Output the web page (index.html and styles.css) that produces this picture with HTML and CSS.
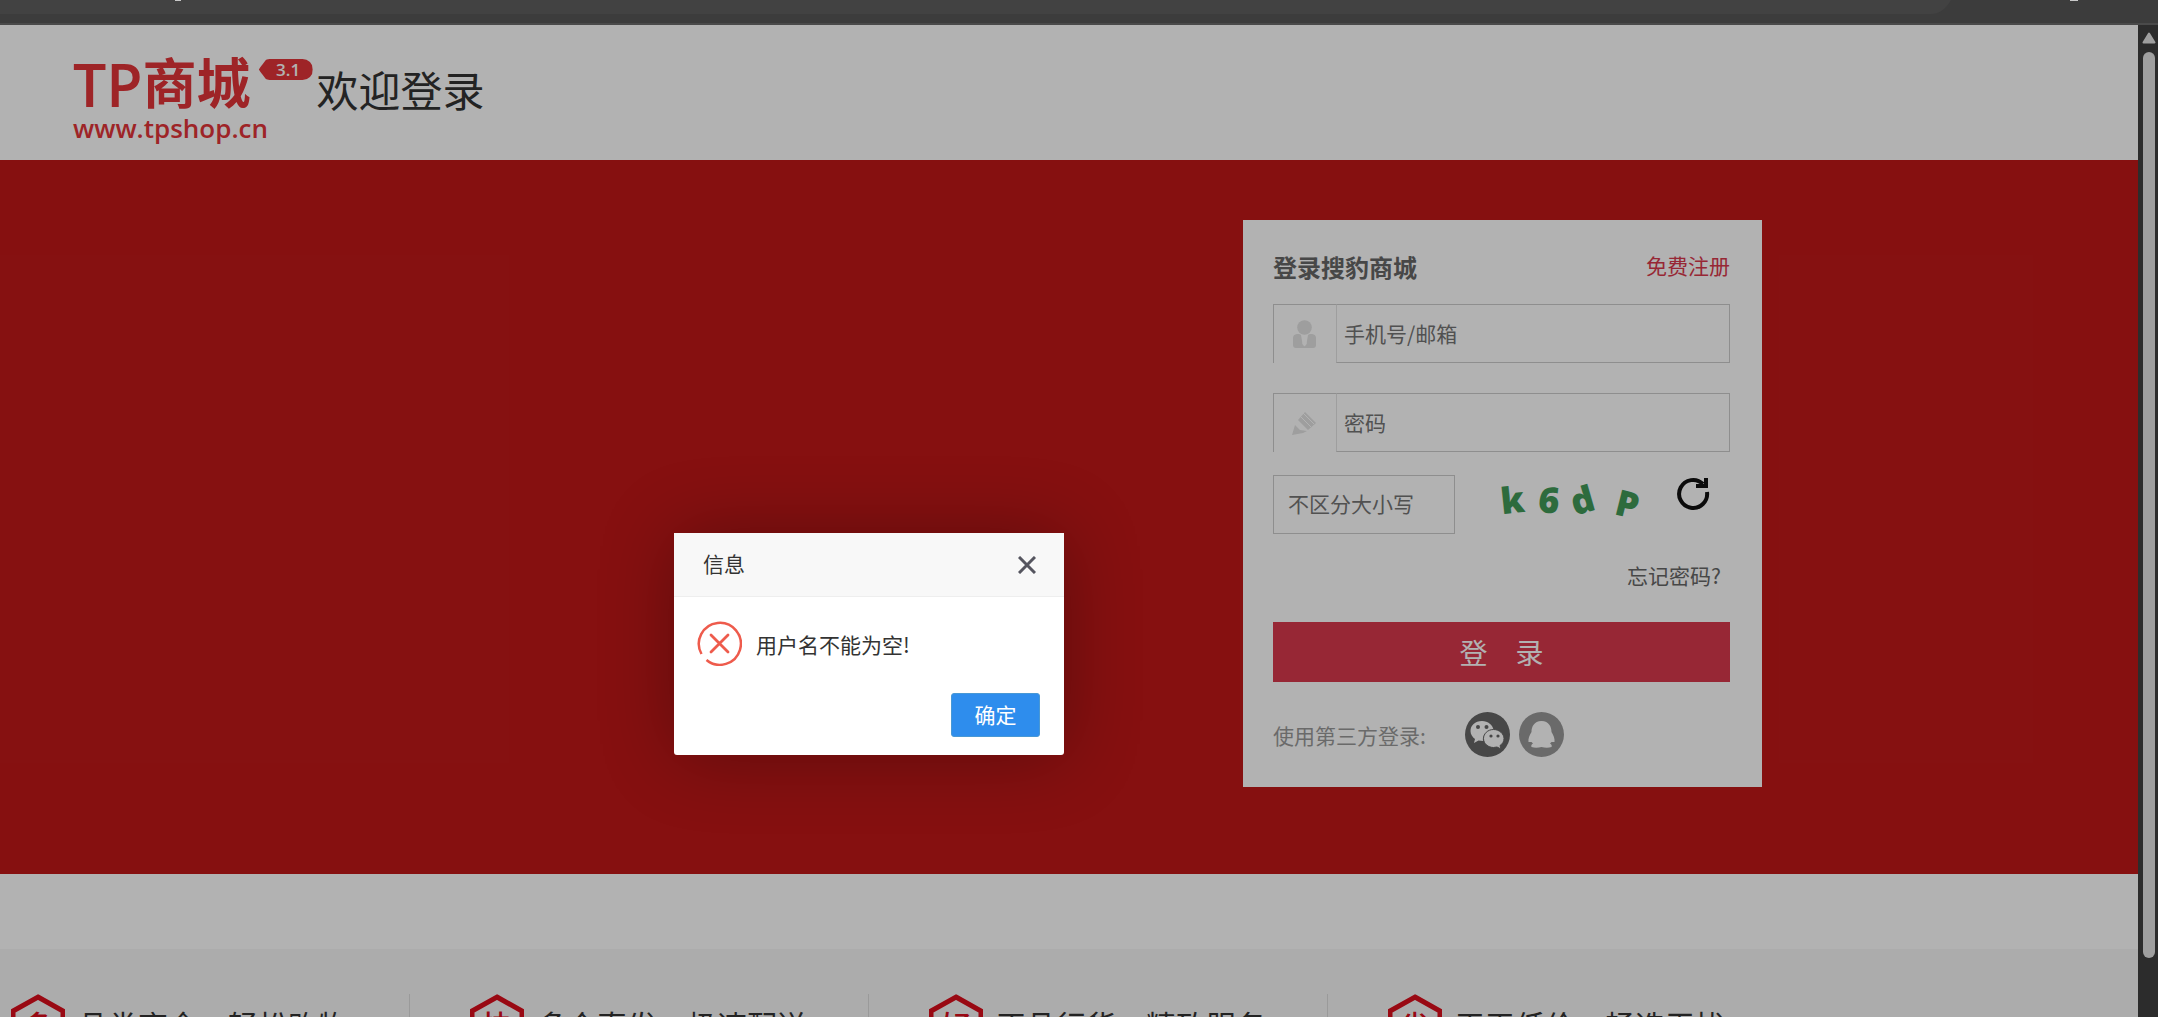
FILE: index.html
```html
<!doctype html>
<html lang="zh-CN">
<head>
  <meta charset="utf-8">
  <title>登录 - 搜豹商城</title>
  <link rel="stylesheet" href="styles.css">
</head>
<body>
<div class="browser-bar">
  <svg width="2100" height="14" viewBox="0 0 2100 14"><path d="M0 0H1951Q1943 14 1931 14H0Z" fill="#424242"/><path d="M175 0H181V1H175ZM2070 0H2078V1H2070Z" fill="#c8c8c8"/></svg>
</div>

<div class="window">
  <div class="page">
    <header class="header">
      <a class="logo" href="#">
        <span class="logo-top"><b class="logo-tp">TP</b><b class="logo-cn">商城</b><i class="logo-ver">3.1</i></span>
        <span class="logo-url">www.tpshop.cn</span>
      </a>
      <h1 class="welcome">欢迎登录</h1>
    </header>

    <main class="banner">
      <form class="login" action="#">
        <div class="login-head">
          <h2>登录搜豹商城</h2>
          <a class="reg" href="#">免费注册</a>
        </div>
        <div class="field">
          <label class="ico" for="username" aria-label="手机号/邮箱">
            <svg width="23" height="28" viewBox="0 0 23 28" fill="#e2e2e2"><circle cx="11.500" cy="7.500" r="7.300"/><path d="M4 14Q7 13.500 8 15L9.500 24Q11.500 27.500 13.500 24L15 15Q16 13.500 19 14Q23 14.500 23 18V25Q23 28 20 28H3Q0 28 0 25V18Q0 14.500 4 14Z"/><path d="M10 15H13L12.500 18L13.500 24L11.500 26.500L9.500 24L10.500 18Z" fill="#fff"/></svg>
          </label>
          <input type="text" id="username" placeholder="手机号/邮箱">
        </div>
        <div class="field">
          <label class="ico" for="password" aria-label="密码">
            <svg width="24" height="24" viewBox="0 0 24 24" fill="#e2e2e2"><path d="M0 24L3 14L8 19L15 20L11 22Z"/><path d="M6 9L13 1L24 12L16 19Z"/><path d="M8 5L19 16M11 2L22 13" stroke="#fff" stroke-width="1" fill="none"/></svg>
          </label>
          <input type="password" id="password" placeholder="密码">
        </div>
        <div class="verify">
          <input type="text" aria-label="验证码" placeholder="不区分大小写">
          <div class="captcha"><span class="c1">k</span><span class="c2">6</span><span class="c3">d</span><span class="c4">P</span></div>
          <button type="button" class="refresh" aria-label="换一张">
            <svg width="34" height="34" viewBox="0 0 34 34" fill="none" stroke="#111" stroke-width="4"><path d="M27 7A14 14 0 1 0 31 15"/><path d="M30 1V9H20" stroke-width="4"/></svg>
          </button>
        </div>
        <a class="forget" href="#">忘记密码?</a>
        <button type="submit" class="submit">登&emsp;录</button>
        <div class="third">
          <span>使用第三方登录:</span>
          <a href="#" aria-label="微信"><svg width="45" height="45" viewBox="0 0 45 45"><circle cx="22.500" cy="22.500" r="22.500" fill="#666"/><path d="M17 9C10 9 5.500 13.500 5.500 19C5.500 22.500 7.500 25 10 27L9 31L13.500 28.500L18 29C17 23 22 18 28.500 18C28 13 23 9 17 9Z" fill="#fff"/><path d="M28.500 17.500C22.500 17.500 18.500 22 18.500 26.500C18.500 32 23.500 35.500 28.500 35.500L32 35L36 37L35 33.500C37.500 32 39 29.500 39 26.500C39 22 34.500 17.500 28.500 17.500Z" fill="#fff" stroke="#666"/><g fill="#666"><circle cx="13" cy="15" r="2"/><circle cx="21.500" cy="15" r="2"/><circle cx="26" cy="24" r="1.600"/><circle cx="33" cy="24" r="1.600"/></g></svg></a>
          <a href="#" aria-label="QQ"><svg width="45" height="45" viewBox="0 0 45 45"><circle cx="22.500" cy="22.500" r="22.500" fill="#999"/><path d="M22.500 9C15 9 12.500 15 12.500 20C10.500 23 9 27 9.500 30H12.500L14 31.500Q11.500 33 12.500 35Q17 36.500 22.500 35Q28 36.500 32.500 35Q33.500 33 31 31.500L32.500 30H35.500C36 27 34.500 23 32.500 20C32.500 15 30 9 22.500 9Z" fill="#fff"/></svg></a>
        </div>
      </form>
    </main>

    <footer class="footer">
      <ul class="service">
        <li><span class="hex"><svg width="54" height="60" viewBox="0 0 54 60"><path d="M27 3L52 17V43L27 57L2 43V17Z" fill="none" stroke="#dc0d1c" stroke-width="5"/></svg><b>多</b></span>品类齐全，轻松购物</li>
        <li><span class="hex"><svg width="54" height="60" viewBox="0 0 54 60"><path d="M27 3L52 17V43L27 57L2 43V17Z" fill="none" stroke="#dc0d1c" stroke-width="5"/></svg><b>快</b></span>多仓直发，极速配送</li>
        <li><span class="hex"><svg width="54" height="60" viewBox="0 0 54 60"><path d="M27 3L52 17V43L27 57L2 43V17Z" fill="none" stroke="#dc0d1c" stroke-width="5"/></svg><b>好</b></span>正品行货，精致服务</li>
        <li><span class="hex"><svg width="54" height="60" viewBox="0 0 54 60"><path d="M27 3L52 17V43L27 57L2 43V17Z" fill="none" stroke="#dc0d1c" stroke-width="5"/></svg><b>省</b></span>天天低价，畅选无忧</li>
      </ul>
    </footer>

    <div class="shade"></div>
    <div class="layer" role="dialog" aria-labelledby="layer-title">
      <div class="layer-title">
        <span id="layer-title">信息</span>
        <button type="button" class="layer-close" aria-label="关闭"><svg width="18" height="18" viewBox="0 0 18 18"><path d="M1 1L17 17M17 1L1 17" stroke="#55555f" stroke-width="3"/></svg></button>
      </div>
      <div class="layer-content">
        <svg width="45" height="45" viewBox="0 0 45 45" fill="none" stroke="#ee5b4c"><path d="M4.500 33A21 21 0 1 1 9.500 39" stroke-width="2.500"/><path d="M14 14L31 31M31 14L14 31" stroke-width="2.800" stroke-linecap="round"/></svg>
        <span>用户名不能为空!</span>
      </div>
      <div class="layer-btn"><button type="button">确定</button></div>
    </div>
  </div>

  <div class="scrollbar">
    <svg width="14" height="12" viewBox="0 0 14 12"><path d="M7 1.500L12.500 10.500H1.500Z" fill="#9f9f9f" stroke="#9f9f9f" stroke-width="2" stroke-linejoin="round"/></svg>
    <div class="thumb"></div>
  </div>
</div>
</body>
</html>
```
FILE: styles.css
```css
*{box-sizing:border-box;}
html,body{height:100%;}
body{margin:0;
display:flex;
flex-direction:column;
overflow:hidden;
background:#3c3c3c;
font:21px/28px "Noto Sans CJK SC",sans-serif;
color:#333;}
h1,h2,ul{margin:0;padding:0;font-weight:normal;}
a{text-decoration:none;color:inherit;}
button,input{font:inherit;margin:0;padding:0;border:0;border-radius:0;}
button{background:none;cursor:pointer;}
svg{display:block;flex:none;}

.browser-bar{flex:none;height:25px;overflow:hidden;border-bottom:2px solid #4a4a4a;}

.window{flex:1;min-height:0;display:flex;}
.page{flex:1;min-width:0;position:relative;overflow:hidden;background:#fff;}
.scrollbar{flex:none;width:20px;padding:7px 0 0 2px;background:#2c2c2c;display:flex;flex-direction:column;align-items:center;gap:8px;}
.thumb{width:12px;height:906px;border-radius:6px;background:#9f9f9f;}

/* header */
.header{height:135px;padding:28px 73px 0;display:flex;gap:4px;}
.logo{display:flex;flex-direction:column;color:#e33438;}
.logo-top{display:flex;height:58px;}
.logo-tp{font:600 59px/62px "Open Sans",sans-serif;}
.logo-cn{font:bold 54px/56px "Noto Sans CJK SC",sans-serif;}
.logo-ver{width:54px;height:21px;margin:6px 0 0 8px;padding-left:5px;border-radius:12px;clip-path:polygon(0 50%,8px 0,100% 0,100% 100%,8px 100%);background:#e33438;color:#fff;font:600 17px/22px "Open Sans",sans-serif;text-align:center;}
.logo-url{font:600 26px/34px "Open Sans",sans-serif;}
.welcome{padding-top:6px;font-size:42px;line-height:60px;}

/* banner + login box */
.banner{height:714px;padding:60px 376px 0 0;display:flex;justify-content:flex-end;align-items:flex-start;background:#c01818;}
.login{width:519px;height:567px;padding:30px 32px 0 30px;background:#fff;}
.login-head{display:flex;justify-content:space-between;height:54px;line-height:34px;}
.login-head h2{font-size:24px;font-weight:bold;color:#666;}
.reg{line-height:30px;color:#d9394d;}
.field{display:flex;height:59px;margin-bottom:30px;}
.ico{width:63px;padding-right:2px;display:flex;align-items:center;justify-content:center;border:solid #ccc;border-width:1px 0 0 1px;}
.field input{flex:1;min-width:0;padding:0 0 2px 7px;border:1px solid #ccc;border-left-color:#e2e2e2;background:none;}
input::placeholder{color:#757575;opacity:1;}
.verify{display:flex;margin-top:-7px;}
.verify input{width:182px;height:59px;padding:0 0 3px 14px;border:1px solid #ccc;}
.captcha{display:flex;width:138px;justify-content:space-between;margin-left:46px;color:#419a58;font:800 36px/50px "Open Sans",sans-serif;}
.captcha span{display:block;}
.c1{transform:rotate(-6deg);}
.c2{transform:rotate(6deg);}
.c3{transform:rotate(-16deg);}
.c4{margin-left:8px;padding-top:4px;transform:rotate(14deg);}
.refresh{margin:2px 0 0 37px;height:34px;}
.forget{display:block;margin:27px 9px 0 0;text-align:right;color:#666;}
.submit{display:block;width:100%;height:60px;margin-top:33px;background:#d9394d;color:#fff;font-size:28px;}
.third{display:flex;align-items:center;gap:9px;margin-top:30px;color:#999;}
.third span{margin-right:30px;}

/* service strip */
.footer{margin-top:75px;padding-top:45px;height:200px;background:#f7f7f7;}
.service{display:flex;gap:49px;list-style:none;}
.service li{display:flex;align-items:center;gap:13px;flex:none;width:410px;height:60px;padding-left:11px;border-right:1px solid #ddd;font-size:30px;white-space:nowrap;}
.service li:last-child{border-right:0;}
.hex{display:grid;place-items:center;color:#dc0d1c;}
.hex svg,.hex b{grid-area:1/1;}
.hex b{font-weight:500;}

/* popup */
.shade{position:absolute;inset:0;background:rgba(0,0,0,.3);}
.layer{position:absolute;left:674px;top:508px;width:390px;background:#fff;border-radius:3px;box-shadow:1px 1px 75px rgba(0,0,0,.3);}
.layer-title{display:flex;align-items:center;justify-content:space-between;height:64px;padding:0 28px 0 29px;background:#f8f8f8;border-bottom:1px solid #eee;}
.layer-title span{padding-bottom:3px;}
.layer-content{display:flex;align-items:center;gap:14px;padding:24px 23px 0;}
.layer-btn{display:flex;justify-content:flex-end;padding:27px 24px 18px;}
.layer-btn button{width:89px;height:44px;padding-bottom:2px;border:1px solid #4898d5;border-radius:3px;background:#2e8ded;color:#fff;}
```
